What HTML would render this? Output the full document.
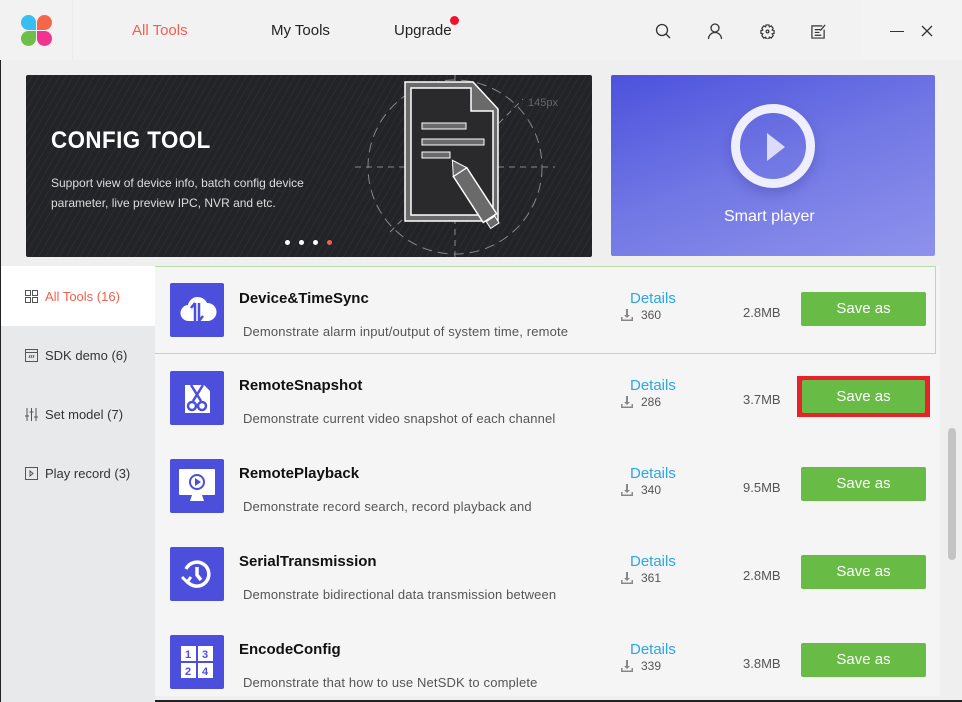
<!DOCTYPE html>
<html><head><meta charset="utf-8"><style>
*{margin:0;padding:0;box-sizing:border-box}
body{width:962px;height:702px;overflow:hidden;background:#efeff0;font-family:"Liberation Sans",sans-serif;position:relative;color:#222}
.abs{position:absolute}
.hdr{left:0;top:0;width:962px;height:60px;background:#f2f2f2}
.nav{font-size:15px;top:22px}
.side{left:1px;top:266px;width:154px;height:436px;background:#e8e9eb}
.side .it{position:absolute;left:24px;font-size:13px;color:#333;display:flex;align-items:center;gap:7px}
.panel{left:155px;top:266px;width:785px;height:430px;background:#f5f5f5;overflow:hidden}
.row{position:absolute;left:0;width:780px;height:88px}
.ico{position:absolute;left:15px;top:17px;width:54px;height:54px;background:#4c4fdc;border-radius:2px}
.ttl{position:absolute;left:84px;top:23px;font-size:15px;font-weight:bold;color:#111}
.dsc{position:absolute;left:88px;top:57px;font-size:13px;color:#555;letter-spacing:.15px}
.det{position:absolute;left:475px;top:23px;font-size:15px;color:#2aa6e6}
.dl{position:absolute;left:466px;top:41px;font-size:12px;color:#555;display:flex;align-items:center;gap:8px}
.sz{position:absolute;left:588px;top:38px;font-size:13px;color:#555}
.btn{position:absolute;left:646px;top:25px;width:125px;height:34px;background:#68bc46;border-radius:2px;color:#fff;font-size:15px;text-align:center;line-height:34px}
</style></head><body>
<div class="abs" style="left:0;top:0;width:1px;height:702px;background:#222"></div>
<div class="abs" style="left:0;top:700px;width:962px;height:2px;background:#222"></div>
<div class="abs hdr"></div>
<div class="abs" style="left:72px;top:0;width:1px;height:60px;background:#ececec"></div>
<!-- logo -->
<div class="abs" style="left:21px;top:15px;width:15px;height:15px;background:#37bff0;border-radius:8px 8px 0 8px"></div>
<div class="abs" style="left:37px;top:15px;width:15px;height:15px;background:#f5664a;border-radius:8px 8px 8px 0"></div>
<div class="abs" style="left:21px;top:31px;width:15px;height:15px;background:#6cbf4a;border-radius:8px 0 8px 8px"></div>
<div class="abs" style="left:37px;top:31px;width:15px;height:15px;background:#ef3590;border-radius:0 8px 8px 8px"></div>
<div class="abs nav" style="left:132px;color:#f0614f">All Tools</div>
<div class="abs nav" style="left:271px;color:#222">My Tools</div>
<div class="abs nav" style="left:394px;color:#222">Upgrade</div>
<div class="abs" style="left:450px;top:16px;width:9px;height:9px;border-radius:50%;background:#f0122b"></div>
<svg class="abs" style="left:655px;top:23px" width="16" height="16" viewBox="0 0 16 16" fill="none" stroke="#333" stroke-width="1.3"><circle cx="7" cy="7" r="5.5"/><path d="M11 11l4 4"/></svg>
<svg class="abs" style="left:707px;top:23px" width="16" height="16" viewBox="0 0 16 16" fill="none" stroke="#333" stroke-width="1.3"><circle cx="8" cy="5" r="4"/><path d="M1.5 16a6.5 6.5 0 0 1 13 0"/></svg>
<svg class="abs" style="left:760px;top:24px" width="15" height="15" viewBox="0 0 16 16" fill="none" stroke="#333" stroke-width="1.3"><path d="M6.5 1h3l.5 2 2-1 2 2.5-1 2 2 .5v3l-2 .5 1 2-2 2.5-2-1-.5 2h-3l-.5-2-2 1-2-2.5 1-2-2-.5v-3l2-.5-1-2 2-2.5 2 1z"/><circle cx="8" cy="8" r="1.5"/></svg>
<svg class="abs" style="left:811px;top:24px" width="15" height="15" viewBox="0 0 16 16" fill="none" stroke="#333" stroke-width="1.3"><path d="M12 2H1v13h13V6"/><path d="M4 6h6M4 9h5M4 12h7M10 7l5-6"/></svg>
<div class="abs" style="left:862px;top:0;width:100px;height:60px;background:#f3f3f3"></div>
<div class="abs" style="left:890px;top:31px;width:14px;height:1.3px;background:#333"></div>
<svg class="abs" style="left:921px;top:25px" width="12" height="12" viewBox="0 0 12 12" stroke="#333" stroke-width="1.3"><path d="M1 1l10 10M11 1L1 11"/></svg>

<!-- banner left -->
<div class="abs" style="left:26px;top:75px;width:566px;height:182px;background:repeating-linear-gradient(-60deg,#232427 0 5px,#2c2d30 5px 6px);border-radius:2px"></div>
<div class="abs" style="left:51px;top:127px;font-size:24px;font-weight:bold;color:#fff;letter-spacing:.5px;transform:scaleX(.93);transform-origin:left">CONFIG TOOL</div>
<div class="abs" style="left:51px;top:173px;font-size:12px;color:#ddd;line-height:20px;width:300px">Support view of device info, batch config device parameter, live preview IPC, NVR and etc.</div>
<div class="abs" style="left:285px;top:240px;width:5px;height:5px;border-radius:50%;background:#fff"></div>
<div class="abs" style="left:299px;top:240px;width:5px;height:5px;border-radius:50%;background:#fff"></div>
<div class="abs" style="left:313px;top:240px;width:5px;height:5px;border-radius:50%;background:#fff"></div>
<div class="abs" style="left:327px;top:240px;width:5px;height:5px;border-radius:50%;background:#f0614f"></div>
<svg class="abs" style="left:340px;top:75px" width="252" height="182" viewBox="0 0 252 182" fill="none">
<circle cx="115" cy="92" r="87" stroke="#888" stroke-dasharray="10 6"/>
<path d="M115 0v182M15 92h200M50 157L183 24" stroke="#888" stroke-dasharray="6 5"/>
<text x="188" y="31" fill="#666" font-size="11" font-family="Liberation Sans">145px</text>
<path d="M65 7h68l25 27v112H65z" fill="#6a6a6a" stroke="#fff" stroke-width="1.5"/>
<path d="M71 13h60v23h22v104H71z" fill="#2a2a2d" stroke="#fff" stroke-width="1.5"/>
<rect x="82" y="48" width="44" height="6" fill="#6a6a6a" stroke="#fff"/>
<rect x="82" y="64" width="62" height="6" fill="#6a6a6a" stroke="#fff"/>
<rect x="82" y="77" width="28" height="6" fill="#6a6a6a" stroke="#fff"/>
<g transform="translate(120 97) rotate(-33)"><path d="M-8 0h16v55h-16z" fill="#6a6a6a" stroke="#fff" stroke-width="1.5"/><path d="M-8 0l8-14 8 14z" fill="#6a6a6a" stroke="#fff"/><rect x="-5" y="56" width="10" height="8" fill="#6a6a6a" stroke="#fff"/></g>
</svg>

<!-- banner right -->
<div class="abs" style="left:611px;top:75px;width:324px;height:181px;border-radius:2px;background:linear-gradient(160deg,#4c52dc 0%,#7278e4 50%,#8e92ec 100%)"></div>
<div class="abs" style="left:731px;top:104px;width:84px;height:84px;border-radius:50%;border:9px solid #eeeefc;box-shadow:0 6px 12px rgba(40,40,140,.25)"></div>
<svg class="abs" style="left:765px;top:131px" width="22" height="32" viewBox="0 0 22 32"><path d="M2 2l18 14L2 30z" fill="#dcdcf8"/></svg>
<div class="abs" style="left:724px;top:208px;font-size:16px;color:#fff">Smart player</div>

<!-- sidebar -->
<div class="abs side">
<div style="position:absolute;left:0;top:0;width:154px;height:60px;background:#fff"></div>
<div class="it" style="top:23px;color:#f0614f"><svg width="13" height="13" viewBox="0 0 13 13" fill="none" stroke="#555"><rect x=".5" y=".5" width="5" height="5"/><rect x="7.5" y=".5" width="5" height="5"/><rect x=".5" y="7.5" width="5" height="5"/><rect x="7.5" y="7.5" width="5" height="5"/></svg>All Tools (16)</div>
<div class="it" style="top:82px"><svg width="13" height="13" viewBox="0 0 13 13" fill="none" stroke="#555"><rect x=".5" y=".5" width="12" height="12"/><path d="M.5 3.5h12M4 9l1-3M6 9l1-3M8 9l1-3"/></svg>SDK demo (6)</div>
<div class="it" style="top:141px"><svg width="13" height="13" viewBox="0 0 13 13" stroke="#555"><path d="M2 0v13M6.5 0v13M11 0v13M0 8h4M4.5 4h4M9 9h4"/></svg>Set model (7)</div>
<div class="it" style="top:200px"><svg width="13" height="13" viewBox="0 0 13 13" fill="none" stroke="#555"><rect x=".5" y=".5" width="12" height="12"/><path d="M5 4v5l3-2.5z"/></svg>Play record (3)</div>
</div>

<!-- list -->
<div class="abs panel">
<div class="row" style="top:0;border:1px solid #b8dca6;border-left:none;height:88px;width:781px">
<div class="ico" style="top:16px"><svg width="54" height="54" viewBox="0 0 54 54"><path d="M19 38a8 8 0 0 1-1-16 10 10 0 0 1 19-2 8 8 0 0 1 1 18z" fill="#fff"/><path d="M25 20v18M25 20l-4 5M29 38V20M29 38l4-5" stroke="#4c4fdc" stroke-width="2.5" fill="none"/></svg></div>
<div class="ttl">Device&amp;TimeSync</div><div class="dsc">Demonstrate alarm input/output of system time, remote</div>
<div class="det">Details</div><div class="dl"><svg width="12" height="12" viewBox="0 0 12 12" fill="#888"><path d="M5 0h2v6h2l-3 3-3-3h2z"/><path d="M0 8h1.5v2.5h9V8H12v4H0z"/></svg>360</div><div class="sz">2.8MB</div><div class="btn">Save as</div></div>
<div class="row" style="top:88px">
<div class="ico"><svg width="54" height="54" viewBox="0 0 54 54"><path d="M15 14h19l6 6v22H15z" fill="#fff"/><g stroke="#4c4fdc" stroke-width="2.5" fill="none"><path d="M21 14l10 16M33 14l-10 16"/><circle cx="22" cy="35" r="4"/><circle cx="32" cy="35" r="4"/></g></svg></div>
<div class="ttl">RemoteSnapshot</div><div class="dsc">Demonstrate current video snapshot of each channel</div>
<div class="det">Details</div><div class="dl"><svg width="12" height="12" viewBox="0 0 12 12" fill="#888"><path d="M5 0h2v6h2l-3 3-3-3h2z"/><path d="M0 8h1.5v2.5h9V8H12v4H0z"/></svg>286</div><div class="sz">3.7MB</div>
<div style="position:absolute;left:642px;top:22px;width:133px;height:41px;background:#e8222a"></div><div class="btn" style="left:647px;top:26px;width:123px;height:33px;line-height:33px">Save as</div></div>
<div class="row" style="top:176px">
<div class="ico"><svg width="54" height="54" viewBox="0 0 54 54"><rect x="9" y="10" width="36" height="26" rx="1" fill="#fff"/><path d="M22 36h10l2 6H20z" fill="#fff"/><circle cx="27" cy="23" r="7" fill="none" stroke="#4c4fdc" stroke-width="2"/><path d="M25 19v8l6-4z" fill="#4c4fdc"/></svg></div>
<div class="ttl">RemotePlayback</div><div class="dsc">Demonstrate record search, record playback and</div>
<div class="det">Details</div><div class="dl"><svg width="12" height="12" viewBox="0 0 12 12" fill="#888"><path d="M5 0h2v6h2l-3 3-3-3h2z"/><path d="M0 8h1.5v2.5h9V8H12v4H0z"/></svg>340</div><div class="sz">9.5MB</div><div class="btn">Save as</div></div>
<div class="row" style="top:264px">
<div class="ico"><svg width="54" height="54" viewBox="0 0 54 54" fill="none" stroke="#fff" stroke-width="3.5"><path d="M17 34a12 12 0 1 0-1-12"/><path d="M27 20v8l4 5"/><path d="M12 30l5 5 4-5" stroke-width="3"/></svg></div>
<div class="ttl">SerialTransmission</div><div class="dsc">Demonstrate bidirectional data transmission between</div>
<div class="det">Details</div><div class="dl"><svg width="12" height="12" viewBox="0 0 12 12" fill="#888"><path d="M5 0h2v6h2l-3 3-3-3h2z"/><path d="M0 8h1.5v2.5h9V8H12v4H0z"/></svg>361</div><div class="sz">2.8MB</div><div class="btn">Save as</div></div>
<div class="row" style="top:352px">
<div class="ico"><svg width="54" height="54" viewBox="0 0 54 54" font-family="Liberation Sans" font-weight="bold" font-size="11" fill="#4c4fdc"><rect x="11" y="11" width="15" height="15" fill="#fff"/><rect x="28" y="11" width="15" height="15" fill="#fff"/><rect x="11" y="28" width="15" height="15" fill="#fff"/><rect x="28" y="28" width="15" height="15" fill="#fff"/><text x="15" y="23">1</text><text x="32" y="23">3</text><text x="15" y="40">2</text><text x="32" y="40">4</text></svg></div>
<div class="ttl">EncodeConfig</div><div class="dsc">Demonstrate that how to use NetSDK to complete</div>
<div class="det">Details</div><div class="dl"><svg width="12" height="12" viewBox="0 0 12 12" fill="#888"><path d="M5 0h2v6h2l-3 3-3-3h2z"/><path d="M0 8h1.5v2.5h9V8H12v4H0z"/></svg>339</div><div class="sz">3.8MB</div><div class="btn">Save as</div></div>
</div>
<div class="abs" style="left:948px;top:428px;width:8px;height:132px;border-radius:4px;background:#c4c4c4"></div>
</body></html>
